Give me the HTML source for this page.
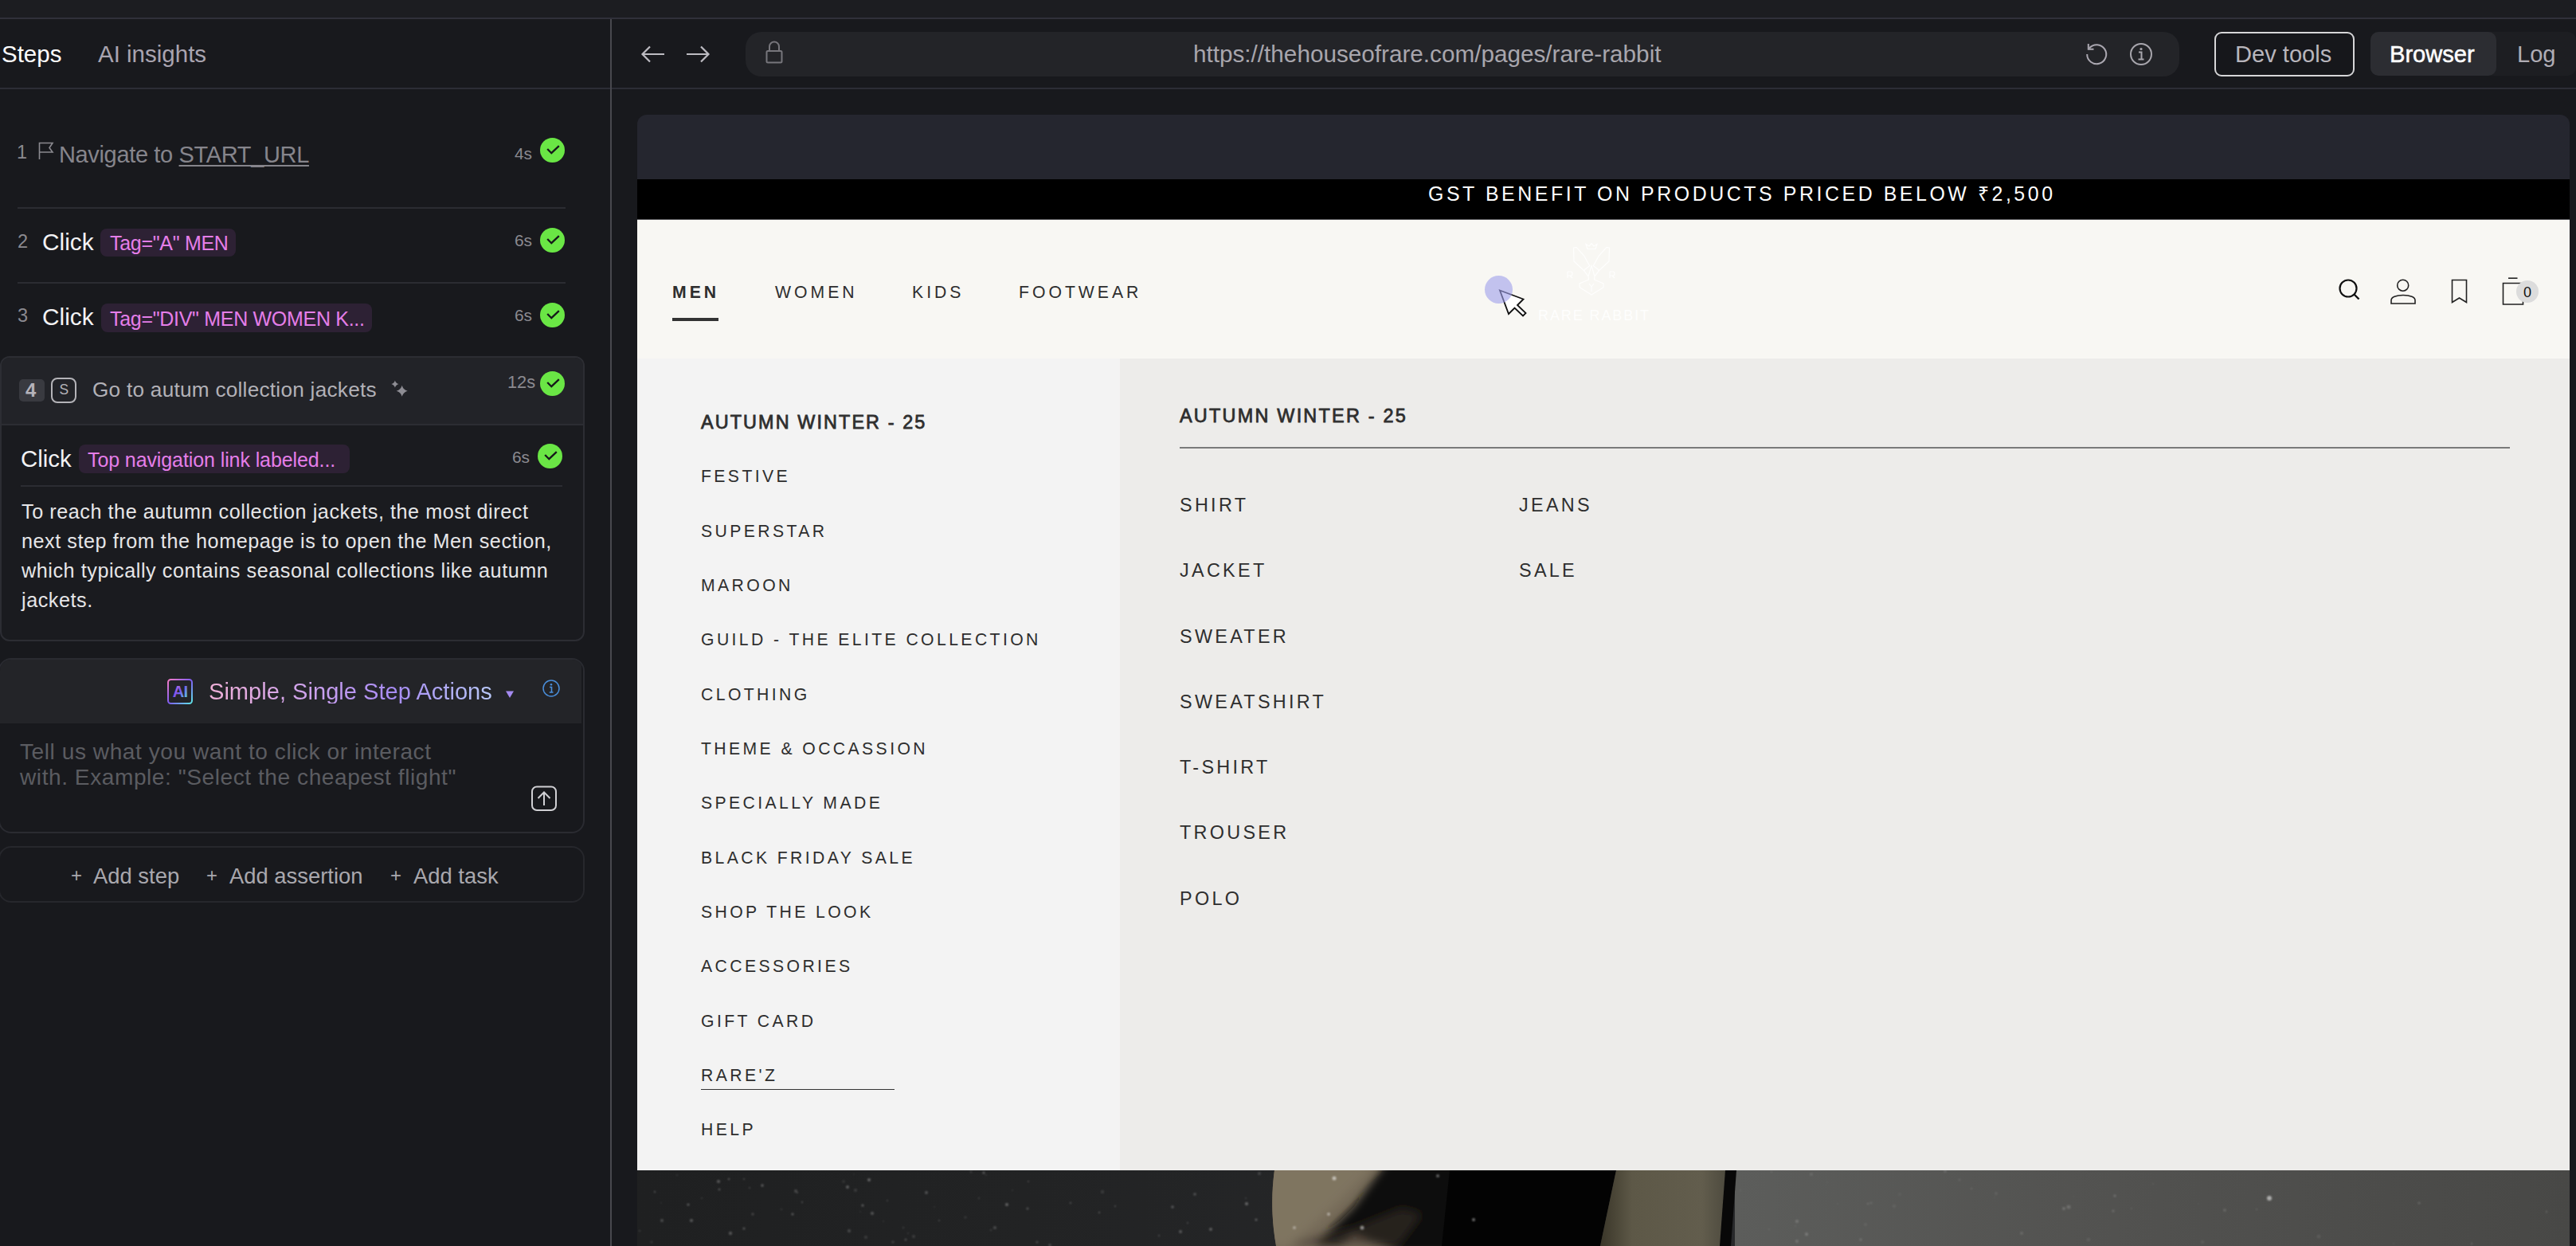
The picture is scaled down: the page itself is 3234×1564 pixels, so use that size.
<!DOCTYPE html>
<html><head><meta charset="utf-8">
<style>
*{margin:0;padding:0;box-sizing:border-box}
html,body{width:3234px;height:1564px;overflow:hidden;background:#18191d;font-family:"Liberation Sans",sans-serif}
.a{position:absolute}
.t{position:absolute;white-space:nowrap;line-height:1}
.hl{position:absolute;height:2px;background:#2c2d34}
.chk{position:absolute;width:31px;height:31px;border-radius:50%;background:#6ae645}
.chk svg{position:absolute;left:0;top:0}
.badge{position:absolute;background:#2d2134;border-radius:8px}
.pk{color:#e57ee9}
.tm{color:#8b8a90}
.m{position:absolute;white-space:nowrap;line-height:1;color:#2e2e2e;font-size:21.2px;letter-spacing:3.4px}
.m.b{font-size:23.4px;letter-spacing:2.1px;-webkit-text-stroke:0.8px #2e2e2e}
.m.r{font-size:23.4px;letter-spacing:3.3px}
.n{position:absolute;white-space:nowrap;line-height:1;color:#2e2e2e;font-size:21.2px;letter-spacing:4px}
</style></head><body>
<!-- top strip -->
<div class="a" style="left:0;top:0;width:3234px;height:22px;background:#1c1d21"></div>
<div class="a" style="left:0;top:22px;width:3234px;height:2px;background:#30303a"></div>
<!-- vertical divider -->
<div class="a" style="left:766px;top:24px;width:2px;height:1540px;background:#48484e"></div>

<!-- LEFT PANEL -->
<div id="left">
<div class="t" style="left:2px;top:53.3px;font-size:29.5px;color:#fff">Steps</div>
<div class="t" style="left:123px;top:53.3px;font-size:29.5px;color:#a9a4b0">AI insights</div>
<div class="a" style="left:0;top:110px;width:766px;height:2px;background:#2c2d36"></div>

<!-- step 1 -->
<div class="t tm" style="left:21px;top:179.7px;font-size:23.5px">1</div>
<svg class="a" style="left:47px;top:177px" width="22" height="24" viewBox="0 0 22 24"><path d="M2.5 23V2.5H19L15 8.5L19 14H2.5" fill="none" stroke="#8b8a90" stroke-width="1.6"/></svg>
<div class="t" style="left:74px;top:179.5px;font-size:29px;letter-spacing:-0.35px;color:#86858c">Navigate to <span style="text-decoration:underline;text-underline-offset:3px;text-decoration-thickness:2px">START_URL</span></div>
<div class="t tm" style="left:646px;top:182.9px;font-size:20.9px">4s</div>
<div class="chk" style="left:678px;top:173px"><svg width="31" height="31"><path d="M9.2 14L14.3 19.2L23.8 10.1" fill="none" stroke="#15161a" stroke-width="2.3"/></svg></div>
<div class="a" style="left:22px;top:260px;width:688px;height:2px;background:#2b2c32"></div>

<!-- step 2 -->
<div class="t tm" style="left:22px;top:291.5px;font-size:23.5px">2</div>
<div class="t" style="left:53px;top:288.8px;font-size:29.8px;color:#f2f2f4">Click</div>
<div class="badge" style="left:126px;top:287px;width:170px;height:35px"></div>
<div class="t pk" style="left:138px;top:293px;font-size:25px;letter-spacing:-0.3px">Tag="A" MEN</div>
<div class="t tm" style="left:646px;top:292px;font-size:20.9px">6s</div>
<div class="chk" style="left:678px;top:286px"><svg width="31" height="31"><path d="M9.2 14L14.3 19.2L23.8 10.1" fill="none" stroke="#15161a" stroke-width="2.3"/></svg></div>
<div class="a" style="left:22px;top:354px;width:688px;height:2px;background:#2b2c32"></div>

<!-- step 3 -->
<div class="t tm" style="left:22px;top:385.3px;font-size:23.5px">3</div>
<div class="t" style="left:53px;top:382.7px;font-size:29.8px;color:#f2f2f4">Click</div>
<div class="badge" style="left:127px;top:381px;width:340px;height:36px"></div>
<div class="t pk" style="left:138px;top:387.5px;font-size:25px;letter-spacing:-0.3px">Tag="DIV" MEN WOMEN K...</div>
<div class="t tm" style="left:646px;top:386px;font-size:20.9px">6s</div>
<div class="chk" style="left:678px;top:380px"><svg width="31" height="31"><path d="M9.2 14L14.3 19.2L23.8 10.1" fill="none" stroke="#15161a" stroke-width="2.3"/></svg></div>

<!-- step 4 container -->
<div class="a" style="left:0;top:447px;width:734px;height:358px;border:2px solid #2c2d33;border-radius:12px;background:#1a1b1f;overflow:hidden">
  <div class="a" style="left:0;top:0;width:730px;height:85px;background:#222328;border-bottom:2px solid #2c2d33"></div>
</div>
<div class="a" style="left:24px;top:476px;width:32px;height:28px;background:#393a40;border-radius:5px"></div>
<div class="t" style="left:32px;top:478.1px;font-size:24px;font-weight:bold;color:#b5b2ba">4</div>
<div class="a" style="left:64px;top:474px;width:32px;height:32px;border:2.2px solid #b4b3b8;border-radius:8px"></div>
<div class="t" style="left:74.5px;top:481.2px;font-size:17.5px;color:#b4b3b8">S</div>
<div class="t" style="left:116px;top:476.3px;font-size:26.2px;letter-spacing:0.25px;color:#b2b1b7">Go to autum collection jackets</div>
<svg class="a" style="left:489px;top:475px" width="26" height="26" viewBox="0 0 26 26"><path d="M6.9 2.4Q7.9 6.0 11.5 7.0Q7.9 8.0 6.9 11.6Q5.9 8.0 2.3 7.0Q5.9 6.0 6.9 2.4Z M15.7 8.8Q17.2 14.3 22.7 15.8Q17.2 17.3 15.7 22.8Q14.2 17.3 8.7 15.8Q14.2 14.3 15.7 8.8Z" fill="#8e8d94"/></svg>
<div class="t tm" style="left:637px;top:469px;font-size:21.8px">12s</div>
<div class="chk" style="left:678px;top:465.5px"><svg width="31" height="31"><path d="M9.2 14L14.3 19.2L23.8 10.1" fill="none" stroke="#15161a" stroke-width="2.3"/></svg></div>

<div class="t" style="left:26px;top:560.8px;font-size:29.4px;color:#f2f2f4">Click</div>
<div class="badge" style="left:99px;top:558px;width:340px;height:36px"></div>
<div class="t pk" style="left:110px;top:564.5px;font-size:25px;letter-spacing:-0.1px">Top navigation link labeled...</div>
<div class="t tm" style="left:643px;top:564px;font-size:20.9px">6s</div>
<div class="chk" style="left:675px;top:557px"><svg width="31" height="31"><path d="M9.2 14L14.3 19.2L23.8 10.1" fill="none" stroke="#15161a" stroke-width="2.3"/></svg></div>
<div class="a" style="left:26px;top:609px;width:680px;height:2px;background:#2b2c32"></div>
<div class="a" style="left:27px;top:623.5px;font-size:25.2px;line-height:37px;letter-spacing:0.55px;color:#e6e6e8;white-space:nowrap">To reach the autumn collection jackets, the most direct<br>next step from the homepage is to open the Men section,<br>which typically contains seasonal collections like autumn<br>jackets.</div>

<!-- AI bar -->
<div class="a" style="left:-2px;top:826px;width:736px;height:220px;border:2px solid #2a2b31;border-radius:16px;overflow:hidden;background:#18191d">
  <div class="a" style="left:0;top:0;width:730px;height:80px;background:#232428"></div>
</div>
<svg class="a" style="left:209px;top:851px" width="34" height="34" viewBox="0 0 34 34">
 <defs><linearGradient id="aig" x1="0" y1="0" x2="1" y2="1"><stop offset="0" stop-color="#f47cc6"/><stop offset="0.5" stop-color="#7f5cf2"/><stop offset="1" stop-color="#5ee6e6"/></linearGradient>
 <linearGradient id="aig2" x1="0" y1="0" x2="1" y2="1"><stop offset="0" stop-color="#e98ad8"/><stop offset="0.45" stop-color="#7a52ee"/><stop offset="1" stop-color="#5ae0e0"/></linearGradient></defs>
 <rect x="2" y="2" width="30" height="30" rx="3.5" fill="none" stroke="url(#aig)" stroke-width="2"/>
 <text x="17" y="24" text-anchor="middle" font-family="Liberation Sans" font-weight="bold" font-size="20" letter-spacing="-0.8" fill="url(#aig2)">AI</text>
</svg>
<div class="t" style="left:262px;top:853.5px;font-size:29.1px;background:linear-gradient(90deg,#f0b0d8 0%,#c9a0f0 40%,#a88cf5 65%,#b8c8f8 100%);-webkit-background-clip:text;background-clip:text;color:transparent">Simple, Single Step Actions</div>
<svg class="a" style="left:634px;top:866px" width="12" height="11"><path d="M1 1.5H11L6 10Z" fill="#a48af0"/></svg>
<svg class="a" style="left:680px;top:852px" width="24" height="24" viewBox="0 0 24 24"><circle cx="12" cy="12" r="10" fill="none" stroke="#4a8fdc" stroke-width="1.5"/><circle cx="12" cy="7.3" r="1.3" fill="#4a8fdc"/><path d="M10 10.5H12.5V17M9.8 17H14.5" fill="none" stroke="#4a8fdc" stroke-width="1.6"/></svg>
<div class="a" style="left:25px;top:928.4px;font-size:28.1px;line-height:32px;letter-spacing:0.55px;color:#5b5c61;white-space:nowrap">Tell us what you want to click or interact<br>with. Example: "Select the cheapest flight"</div>
<svg class="a" style="left:666px;top:986px" width="34" height="33" viewBox="0 0 34 33"><rect x="2" y="1.5" width="30" height="29.5" rx="6" fill="none" stroke="#d0d0d4" stroke-width="2"/><path d="M17 25V8.5M9.5 16L17 8.5L24.5 16" fill="none" stroke="#d0d0d4" stroke-width="2"/></svg>

<!-- Add bar -->
<div class="a" style="left:-2px;top:1062px;width:736px;height:71px;border:2px solid #26272c;border-radius:16px"></div>
<div class="t" style="left:89px;top:1087px;font-size:24px;color:#a9a8ae">+</div>
<div class="t" style="left:117px;top:1085.7px;font-size:27.4px;color:#a9a8ae">Add step</div>
<div class="t" style="left:259px;top:1087px;font-size:24px;color:#a9a8ae">+</div>
<div class="t" style="left:288px;top:1085.7px;font-size:27.4px;color:#a9a8ae">Add assertion</div>
<div class="t" style="left:490px;top:1087px;font-size:24px;color:#a9a8ae">+</div>
<div class="t" style="left:519px;top:1085.7px;font-size:27.4px;color:#a9a8ae">Add task</div>
</div>

<!-- RIGHT TOOLBAR -->
<div id="toolbar">
<div class="a" style="left:768px;top:110px;width:2466px;height:2px;background:#2c2d36"></div>
<svg class="a" style="left:803px;top:55px" width="34" height="26" viewBox="0 0 34 26"><path d="M31 13H4M13 3.5L3.5 13L13 22.5" fill="none" stroke="#bdbcc2" stroke-width="2.2"/></svg>
<svg class="a" style="left:859px;top:55px" width="34" height="26" viewBox="0 0 34 26"><path d="M3 13H30M21 3.5L30.5 13L21 22.5" fill="none" stroke="#bdbcc2" stroke-width="2.2"/></svg>
<div class="a" style="left:936px;top:40px;width:1800px;height:56px;background:#232428;border-radius:20px"></div>
<svg class="a" style="left:959px;top:50px" width="26" height="31" viewBox="0 0 26 31"><path d="M7 14V8.5A6 6 0 0 1 19 8.5V14" fill="none" stroke="#77767c" stroke-width="2"/><rect x="3.5" y="14" width="19" height="14.5" rx="1.5" fill="none" stroke="#77767c" stroke-width="2"/></svg>
<div class="t" style="left:1498px;top:53px;font-size:29.7px;color:#a8a6ad">https://thehouseofrare.com/pages/rare-rabbit</div>
<svg class="a" style="left:2617px;top:51px" width="30" height="32" viewBox="0 0 30 32"><path d="M6 9.5A12 12 0 1 1 3.2 17" fill="none" stroke="#aaa7b0" stroke-width="2"/><path d="M4.8 4V10.8H11.5" fill="none" stroke="#aaa7b0" stroke-width="2"/></svg>
<svg class="a" style="left:2673px;top:53px" width="30" height="30" viewBox="0 0 30 30"><circle cx="15" cy="15" r="13" fill="none" stroke="#a8a6ad" stroke-width="2"/><circle cx="15" cy="8.5" r="1.6" fill="#a8a6ad"/><path d="M12 12.5H15.5V21.5M11.5 21.5H18.5" fill="none" stroke="#a8a6ad" stroke-width="2"/></svg>
<div class="a" style="left:2780px;top:40px;width:176px;height:56px;border:2px solid #d6d6d8;border-radius:9px;background:#16171b"></div>
<div class="t" style="left:2806px;top:53.9px;font-size:29.1px;color:#b8b5bc">Dev tools</div>
<div class="a" style="left:2976px;top:40px;width:258px;height:55px;background:#1d1e22;border-radius:10px"></div>
<div class="a" style="left:2976px;top:40px;width:158px;height:55px;background:#2c2d32;border-radius:10px"></div>
<div class="t" style="left:3000px;top:53.9px;font-size:29.1px;color:#ffffff;-webkit-text-stroke:0.5px #fff">Browser</div>
<div class="t" style="left:3160px;top:53.9px;font-size:29.1px;color:#b0adb5">Log</div>
</div>

<!-- BROWSER VIEWPORT -->
<div class="a" style="left:800px;top:144px;width:2426px;height:1420px;border-radius:12px 12px 0 0;overflow:hidden;background:#25262f">
  <div class="a" style="left:0;top:81px;width:2426px;height:51px;background:#000"></div>
  <div class="t" style="left:993px;top:86.9px;font-size:24.9px;color:#fff;letter-spacing:3.57px">GST BENEFIT ON PRODUCTS PRICED BELOW ₹2,500</div>
  <div class="a" style="left:0;top:131.5px;width:2426px;height:175px;background:#f8f7f3;border-bottom:1px solid #dcdcdc"></div>
  <div class="a" style="left:0;top:131px;width:2426px;height:1px;background:#55565a"></div>
  <!-- menu panels -->
  <div class="a" style="left:0;top:306px;width:606px;height:1019px;background:#f3f3f3"></div>
  <div class="a" style="left:606px;top:306px;width:1820px;height:1019px;background:#edecea"></div>
  <!-- photo -->
  <svg class="a" style="left:0;top:1325px" width="2426" height="95" viewBox="0 0 2426 95">
  <defs><linearGradient id="pg1" x1="0" x2="1" y1="0" y2="0"><stop offset="0" stop-color="#1f2021"/><stop offset="0.2" stop-color="#222324"/><stop offset="0.55" stop-color="#28292b"/><stop offset="1" stop-color="#2a2b2d"/></linearGradient><linearGradient id="pg2" x1="0" x2="1" y1="0" y2="0"><stop offset="0" stop-color="#5c5d5b"/><stop offset="0.4" stop-color="#535351"/><stop offset="1" stop-color="#484846"/></linearGradient><linearGradient id="pb" x1="0" x2="1" y1="0" y2="0.3"><stop offset="0" stop-color="#7a6f5c"/><stop offset="0.5" stop-color="#6a604f"/><stop offset="1" stop-color="#3a342b"/></linearGradient><linearGradient id="po" x1="0" x2="1" y1="0" y2="0"><stop offset="0" stop-color="#3a3629"/><stop offset="0.25" stop-color="#5d5847"/><stop offset="0.8" stop-color="#625d4d"/><stop offset="1" stop-color="#4d4a3e"/></linearGradient><clipPath id="pclip"><path d="M800 0H1040V95H802C796 60 796 30 800 0Z"/></clipPath><filter id="sblur" x="-50%" y="-50%" width="200%" height="200%"><feGaussianBlur stdDeviation="0.9"/></filter><filter id="pblur" x="-20%" y="-50%" width="140%" height="200%"><feGaussianBlur stdDeviation="6"/></filter></defs>
  <rect x="0" y="0" width="2426" height="95" fill="url(#pg1)"/>
  <rect x="1378" y="0" width="1048" height="95" fill="url(#pg2)"/>
  <path d="M800 0H1040V95H802C796 60 796 30 800 0Z" fill="#756a58"/>
  <g clip-path="url(#pclip)"><g filter="url(#pblur)"><path d="M940 -10L1040 -10L1040 105L960 105L900 80L880 95L850 95L900 45Z" fill="#0b0a08"/><path d="M800 95L955 95L985 55L960 48L900 72Z" fill="#3e382e" opacity="0.54"/><path d="M790 -10H930L880 40L820 95H790Z" fill="#7f7461"/></g></g>
  <path d="M1020 0H1229L1209 95H1010Z" fill="#030303"/>
  <path d="M1229 0H1368L1360 95H1209Z" fill="url(#po)"/>
  <path d="M1366 0H1380L1373 95H1359Z" fill="#080808"/>
  <g filter="url(#sblur)"><circle cx="259" cy="14" r="1.7" fill="#fff" opacity="0.11"/>
  <circle cx="429" cy="35" r="0.9" fill="#fff" opacity="0.20"/>
  <circle cx="30" cy="41" r="0.9" fill="#fff" opacity="0.11"/>
  <circle cx="340" cy="79" r="1.0" fill="#fff" opacity="0.14"/>
  <circle cx="502" cy="90" r="1.6" fill="#fff" opacity="0.17"/>
  <circle cx="781" cy="4" r="2.0" fill="#fff" opacity="0.15"/>
  <circle cx="115" cy="11" r="1.2" fill="#fff" opacity="0.26"/>
  <circle cx="145" cy="55" r="1.7" fill="#fff" opacity="0.17"/>
  <circle cx="438" cy="6" r="0.9" fill="#fff" opacity="0.13"/>
  <circle cx="544" cy="41" r="1.2" fill="#fff" opacity="0.21"/>
  <circle cx="363" cy="28" r="1.9" fill="#fff" opacity="0.23"/>
  <circle cx="195" cy="55" r="1.5" fill="#fff" opacity="0.28"/>
  <circle cx="584" cy="27" r="2.2" fill="#fff" opacity="0.11"/>
  <circle cx="334" cy="72" r="1.0" fill="#fff" opacity="0.19"/>
  <circle cx="31" cy="63" r="1.9" fill="#fff" opacity="0.21"/>
  <circle cx="700" cy="30" r="1.8" fill="#fff" opacity="0.22"/>
  <circle cx="464" cy="43" r="2.0" fill="#fff" opacity="0.29"/>
  <circle cx="379" cy="63" r="0.9" fill="#fff" opacity="0.24"/>
  <circle cx="518" cy="94" r="2.0" fill="#fff" opacity="0.15"/>
  <circle cx="309" cy="64" r="0.8" fill="#fff" opacity="0.19"/>
  <circle cx="134" cy="11" r="0.9" fill="#fff" opacity="0.25"/>
  <circle cx="103" cy="24" r="1.3" fill="#fff" opacity="0.27"/>
  <circle cx="64" cy="43" r="1.6" fill="#fff" opacity="0.28"/>
  <circle cx="655" cy="82" r="1.2" fill="#fff" opacity="0.18"/>
  <circle cx="287" cy="84" r="2.1" fill="#fff" opacity="0.12"/>
  <circle cx="141" cy="22" r="1.1" fill="#fff" opacity="0.19"/>
  <circle cx="471" cy="25" r="0.8" fill="#fff" opacity="0.18"/>
  <circle cx="295" cy="54" r="2.1" fill="#fff" opacity="0.23"/>
  <circle cx="412" cy="59" r="1.7" fill="#fff" opacity="0.10"/>
  <circle cx="720" cy="74" r="2.0" fill="#fff" opacity="0.26"/>
  <circle cx="314" cy="38" r="0.9" fill="#fff" opacity="0.22"/>
  <circle cx="50" cy="6" r="1.1" fill="#fff" opacity="0.13"/>
  <circle cx="272" cy="5" r="0.8" fill="#fff" opacity="0.12"/>
  <circle cx="81" cy="35" r="0.8" fill="#fff" opacity="0.28"/>
  <circle cx="491" cy="14" r="1.2" fill="#fff" opacity="0.16"/>
  <circle cx="291" cy="12" r="2.0" fill="#fff" opacity="0.30"/>
  <circle cx="373" cy="46" r="0.9" fill="#fff" opacity="0.11"/>
  <circle cx="274" cy="25" r="2.0" fill="#fff" opacity="0.13"/>
  <circle cx="18" cy="90" r="1.5" fill="#fff" opacity="0.12"/>
  <circle cx="435" cy="3" r="1.5" fill="#fff" opacity="0.29"/>
  <circle cx="691" cy="66" r="1.2" fill="#fff" opacity="0.17"/>
  <circle cx="134" cy="73" r="1.5" fill="#fff" opacity="0.25"/>
  <circle cx="264" cy="21" r="1.9" fill="#fff" opacity="0.29"/>
  <circle cx="682" cy="77" r="1.9" fill="#fff" opacity="0.25"/>
  <circle cx="181" cy="49" r="1.3" fill="#fff" opacity="0.10"/>
  <circle cx="22" cy="27" r="1.2" fill="#fff" opacity="0.23"/>
  <circle cx="765" cy="42" r="2.1" fill="#fff" opacity="0.30"/>
  <circle cx="764" cy="35" r="1.1" fill="#fff" opacity="0.14"/>
  <circle cx="157" cy="19" r="1.7" fill="#fff" opacity="0.28"/>
  <circle cx="672" cy="46" r="1.7" fill="#fff" opacity="0.26"/>
  <circle cx="68" cy="63" r="2.1" fill="#fff" opacity="0.25"/>
  <circle cx="600" cy="45" r="1.0" fill="#fff" opacity="0.26"/>
  <circle cx="266" cy="76" r="2.2" fill="#fff" opacity="0.17"/>
  <circle cx="321" cy="90" r="1.8" fill="#fff" opacity="0.13"/>
  <circle cx="102" cy="14" r="2.1" fill="#fff" opacity="0.26"/>
  <circle cx="117" cy="79" r="2.2" fill="#fff" opacity="0.23"/>
  <circle cx="280" cy="52" r="1.0" fill="#fff" opacity="0.09"/>
  <circle cx="777" cy="62" r="1.5" fill="#fff" opacity="0.29"/>
  <circle cx="347" cy="83" r="2.0" fill="#fff" opacity="0.13"/>
  <circle cx="201" cy="28" r="1.1" fill="#fff" opacity="0.22"/>
  <circle cx="207" cy="40" r="1.0" fill="#fff" opacity="0.28"/>
  <circle cx="283" cy="44" r="1.6" fill="#fff" opacity="0.28"/>
  <circle cx="337" cy="87" r="1.5" fill="#fff" opacity="0.20"/>
  <circle cx="419" cy="2" r="1.4" fill="#fff" opacity="0.13"/>
  <circle cx="3" cy="76" r="1.0" fill="#fff" opacity="0.19"/>
  <circle cx="580" cy="53" r="1.3" fill="#fff" opacity="0.20"/>
  <circle cx="444" cy="75" r="0.9" fill="#fff" opacity="0.21"/>
  <circle cx="199" cy="26" r="1.9" fill="#fff" opacity="0.20"/>
  <circle cx="449" cy="72" r="2.1" fill="#fff" opacity="0.19"/>
  <circle cx="490" cy="48" r="1.5" fill="#fff" opacity="0.23"/>
  <circle cx="875" cy="10" r="2.5" fill="#fff" opacity="0.54"/>
  <circle cx="910" cy="72" r="2.5" fill="#fff" opacity="0.48"/>
  <circle cx="868" cy="55" r="2" fill="#fff" opacity="0.42"/>
  <circle cx="825" cy="72" r="2" fill="#fff" opacity="0.36"/>
  <circle cx="1050" cy="62" r="2" fill="#fff" opacity="0.42"/>
  <circle cx="1005" cy="7" r="2" fill="#fff" opacity="0.36"/>
  <circle cx="2049" cy="35" r="3" fill="#fff" opacity="0.54"/>
  <circle cx="1853" cy="51" r="1.6" fill="#fff" opacity="0.17"/>
  <circle cx="2111" cy="83" r="2.4" fill="#fff" opacity="0.08"/>
  <circle cx="1965" cy="90" r="2.2" fill="#fff" opacity="0.07"/>
  <circle cx="1507" cy="42" r="0.9" fill="#fff" opacity="0.08"/>
  <circle cx="1456" cy="64" r="2.1" fill="#fff" opacity="0.17"/>
  <circle cx="1542" cy="68" r="1.9" fill="#fff" opacity="0.07"/>
  <circle cx="2303" cy="92" r="1.2" fill="#fff" opacity="0.17"/>
  <circle cx="1797" cy="46" r="2.5" fill="#fff" opacity="0.16"/>
  <circle cx="1549" cy="41" r="1.7" fill="#fff" opacity="0.09"/>
  <circle cx="1585" cy="30" r="2.0" fill="#fff" opacity="0.05"/>
  <circle cx="1960" cy="42" r="0.8" fill="#fff" opacity="0.09"/>
  <circle cx="2033" cy="49" r="0.9" fill="#fff" opacity="0.18"/>
  <circle cx="2205" cy="92" r="1.0" fill="#fff" opacity="0.08"/>
  <circle cx="1421" cy="74" r="1.3" fill="#fff" opacity="0.07"/>
  <circle cx="1822" cy="87" r="2.2" fill="#fff" opacity="0.08"/>
  <circle cx="1536" cy="87" r="1.8" fill="#fff" opacity="0.14"/>
  <circle cx="1474" cy="5" r="2.0" fill="#fff" opacity="0.10"/>
  <circle cx="1456" cy="89" r="1.9" fill="#fff" opacity="0.16"/>
  <circle cx="1468" cy="81" r="0.9" fill="#fff" opacity="0.16"/>
  <circle cx="1855" cy="32" r="1.7" fill="#fff" opacity="0.17"/>
  <circle cx="1660" cy="12" r="1.7" fill="#fff" opacity="0.08"/>
  <circle cx="1494" cy="15" r="0.9" fill="#fff" opacity="0.07"/>
  <circle cx="1706" cy="29" r="2.1" fill="#fff" opacity="0.08"/>
  <circle cx="1903" cy="17" r="1.4" fill="#fff" opacity="0.05"/>
  <circle cx="1642" cy="1" r="2.0" fill="#fff" opacity="0.12"/>
  <circle cx="1578" cy="45" r="2.4" fill="#fff" opacity="0.06"/>
  <circle cx="2237" cy="41" r="1.6" fill="#fff" opacity="0.16"/>
  <circle cx="1791" cy="48" r="2.0" fill="#fff" opacity="0.18"/>
  <circle cx="1738" cy="79" r="2.0" fill="#fff" opacity="0.13"/>
  <circle cx="1803" cy="33" r="0.9" fill="#fff" opacity="0.07"/>
  <circle cx="1454" cy="70" r="1.2" fill="#fff" opacity="0.07"/>
  <circle cx="1468" cy="80" r="2.3" fill="#fff" opacity="0.14"/>
  <circle cx="1675" cy="23" r="1.3" fill="#fff" opacity="0.11"/>
  <circle cx="1545" cy="42" r="1.2" fill="#fff" opacity="0.17"/>
  <circle cx="2397" cy="52" r="1.2" fill="#fff" opacity="0.17"/>
  <circle cx="1704" cy="34" r="0.8" fill="#fff" opacity="0.10"/>
  <circle cx="1876" cy="48" r="1.1" fill="#fff" opacity="0.11"/>
  <circle cx="1385" cy="25" r="1.0" fill="#fff" opacity="0.10"/>
  <circle cx="1424" cy="2" r="1.3" fill="#fff" opacity="0.08"/>
  <circle cx="1993" cy="50" r="2.1" fill="#fff" opacity="0.13"/>
  </g></svg>
</div>

<!-- nav -->
<div class="n" style="left:844px;top:356.0px;font-weight:bold">MEN</div>
<div class="n" style="left:973px;top:356.0px">WOMEN</div>
<div class="n" style="left:1145px;top:356.0px">KIDS</div>
<div class="n" style="left:1279px;top:356.0px">FOOTWEAR</div>
<div class="a" style="left:844px;top:399px;width:58px;height:4px;background:#333"></div>

<!-- logo -->
<svg class="a" style="left:1925px;top:300px" width="140" height="110" viewBox="0 0 140 110" fill="none" stroke="#fefefd" stroke-width="1.2">
 <path d="M66 6.5L68 12.5H78L80 6.5L76 9L73 5.5L70 9Z"/>
 <path d="M50.5 11L54 10.3L63.7 21L70.7 33.6L65 38L63.7 39.8L51 28Z"/>
 <path d="M95.5 11L92 10.3L82.3 21L75.3 33.6L81 38L82.3 39.8L95 28Z"/>
 <path d="M63.7 39.8L69 46.8L69.5 51L58 56L58.2 60.7L73 70.1L88 60.7L88 56L76.5 51L77 46.8L82.3 39.8"/>
 <path d="M69 46.8L73 33.6L77 46.8M73 60L70 56M73 60L76 56M73 60V66"/>
 <path d="M43 41V49M43 41H47Q49 41 49 43.5Q49 46 47 46H43M46 46L49 49"/>
 <path d="M96 41V49M96 41H100Q102 41 102 43.5Q102 46 100 46H96M99 46L102 49"/>
</svg>
<div class="t" style="left:1931px;top:387px;font-size:18px;color:#fefefd;letter-spacing:1.9px">RARE RABBIT</div>
<!-- cursor -->
<svg class="a" style="left:1878px;top:360px" width="44" height="40" viewBox="0 0 44 40"><path d="M5 4.5L34.5 15.5L27 23L37.5 33L34 36.5L23.5 26.5L16 34Z" fill="#fff" stroke="#111" stroke-width="1.8" stroke-linejoin="miter"/></svg>
<div class="a" style="left:1864px;top:346px;width:35px;height:35px;border-radius:50%;background:rgba(158,159,235,0.6)"></div>

<!-- icons -->
<svg class="a" style="left:2930px;top:345px" width="40" height="40" viewBox="0 0 40 40"><circle cx="18" cy="17" r="10.5" fill="none" stroke="#111" stroke-width="2.2"/><path d="M25.5 24.5L31.5 30.5" stroke="#111" stroke-width="2.4"/></svg>
<svg class="a" style="left:2996px;top:345px" width="42" height="42" viewBox="0 0 42 42"><circle cx="20.7" cy="13.2" r="7" fill="none" stroke="#222" stroke-width="1.6"/><path d="M6 36H36V32C36 28 30 25.5 21 25.5C12 25.5 6 28 6 32Z" fill="none" stroke="#222" stroke-width="1.6"/></svg>
<svg class="a" style="left:3072px;top:345px" width="32" height="42" viewBox="0 0 32 42"><path d="M6.5 6.5H24.5V34.5L15.5 29L6.5 34.5Z" fill="none" stroke="#222" stroke-width="1.6"/></svg>
<svg class="a" style="left:3136px;top:345px" width="62" height="42" viewBox="0 0 62 42"><path d="M6.5 10.5H31.5V37H6.5Z" fill="none" stroke="#222" stroke-width="1.6"/><path d="M13 4.2H24.5" stroke="#222" stroke-width="1.6"/><circle cx="37" cy="21" r="14" fill="#dcdcdc"/><text x="37" y="27.5" text-anchor="middle" font-family="Liberation Sans" font-size="18" fill="#111">0</text></svg>

<!-- menu left -->
<div class="m b" style="left:880px;top:518.8px">AUTUMN WINTER - 25</div>
<div class="m" style="left:880px;top:587.4px">FESTIVE</div>
<div class="m" style="left:880px;top:655.7px">SUPERSTAR</div>
<div class="m" style="left:880px;top:724.0px">MAROON</div>
<div class="m" style="left:880px;top:792.4px">GUILD - THE ELITE COLLECTION</div>
<div class="m" style="left:880px;top:860.7px">CLOTHING</div>
<div class="m" style="left:880px;top:929.1px">THEME &amp; OCCASSION</div>
<div class="m" style="left:880px;top:997.4px">SPECIALLY MADE</div>
<div class="m" style="left:880px;top:1065.7px">BLACK FRIDAY SALE</div>
<div class="m" style="left:880px;top:1134.1px">SHOP THE LOOK</div>
<div class="m" style="left:880px;top:1202.4px">ACCESSORIES</div>
<div class="m" style="left:880px;top:1270.8px">GIFT CARD</div>
<div class="m" style="left:880px;top:1339.1px">RARE'Z</div>
<div class="m" style="left:880px;top:1407.4px">HELP</div>
<div class="a" style="left:880px;top:1366.5px;width:243px;height:1.5px;background:#333"></div>
<!-- menu right -->
<div class="m b" style="left:1481px;top:511.1px;letter-spacing:2.25px">AUTUMN WINTER - 25</div>
<div class="a" style="left:1481px;top:560.5px;width:1670px;height:2px;background:#7a7a7a"></div>
<div class="m r" style="left:1481px;top:623.0px">SHIRT</div>
<div class="m r" style="left:1481px;top:705.3px">JACKET</div>
<div class="m r" style="left:1481px;top:787.5px">SWEATER</div>
<div class="m r" style="left:1481px;top:869.8px">SWEATSHIRT</div>
<div class="m r" style="left:1481px;top:952.1px">T-SHIRT</div>
<div class="m r" style="left:1481px;top:1034.3px">TROUSER</div>
<div class="m r" style="left:1481px;top:1116.6px">POLO</div>
<div class="m r" style="left:1907px;top:623.0px">JEANS</div>
<div class="m r" style="left:1907px;top:705.3px">SALE</div>
</body></html>
